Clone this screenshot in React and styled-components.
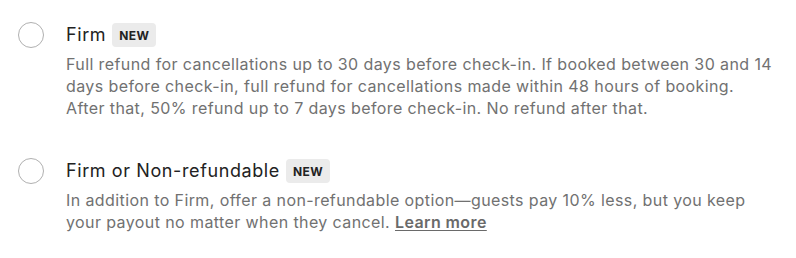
import React from 'react';
import styled, { createGlobalStyle } from 'styled-components';

const GlobalStyle = createGlobalStyle`
  body {
    margin: 0;
    background: #fff;
    font-family: Inter, 'Liberation Sans', sans-serif;
  }
`;

const List = styled.div`
  display: flex;
  flex-direction: column;
  gap: 40px;
  padding: 23px 20px 0 18px;
`;

const Option = styled.label`
  display: flex;
  align-items: flex-start;
  gap: 22px;
  cursor: pointer;
`;

const Radio = styled.span`
  flex: none;
  width: 26px;
  height: 26px;
  margin-top: -1px;
  border-radius: 50%;
  border: 1px solid #b0b0b0;
  box-sizing: border-box;
  background: #fff;
`;

const Body = styled.div`
  display: flex;
  flex-direction: column;
  gap: 6px;
  min-width: 0;
`;

const TitleRow = styled.div`
  display: flex;
  align-items: center;
  gap: 6px;
  height: 24px;
`;

const Title = styled.span`
  font-size: 18px;
  line-height: 24px;
  color: #222222;
  letter-spacing: 0.6px;
`;

const Badge = styled.span`
  display: inline-flex;
  align-items: center;
  height: 24px;
  padding: 0 7px;
  border-radius: 4px;
  background: #ebebeb;
  color: #222222;
  font-size: 12px;
  font-weight: 700;
  letter-spacing: 0.4px;
`;

const Desc = styled.p`
  margin: 0;
  font-size: 16px;
  line-height: 22px;
  letter-spacing: 0.4px;
  color: #717171;
`;

const Link = styled.a`
  color: #6a6a6a;
  font-weight: 600;
  text-decoration: underline;
  text-underline-offset: 2px;
`;

const options = [
  {
    id: 'firm',
    title: 'Firm',
    desc: 'Full refund for cancellations up to 30 days before check-in. If booked between 30 and 14 days before check-in, full refund for cancellations made within 48 hours of booking. After that, 50% refund up to 7 days before check-in. No refund after that.'
  },
  {
    id: 'firm-nr',
    title: 'Firm or Non-refundable',
    desc: 'In addition to Firm, offer a non-refundable option\u2014guests pay 10% less, but you keep your payout no matter when they cancel.',
    link: 'Learn more'
  }
];

export default function App() {
  return (
    <>
      <GlobalStyle />
      <List>
        {options.map(o => (
          <Option key={o.id}>
            <Radio />
            <Body>
              <TitleRow>
                <Title>{o.title}</Title>
                <Badge>NEW</Badge>
              </TitleRow>
              <Desc>
                {o.desc}
                {o.link && (
                  <>
                    {' '}
                    <Link href='#'>{o.link}</Link>
                  </>
                )}
              </Desc>
            </Body>
          </Option>
        ))}
      </List>
    </>
  );
}
